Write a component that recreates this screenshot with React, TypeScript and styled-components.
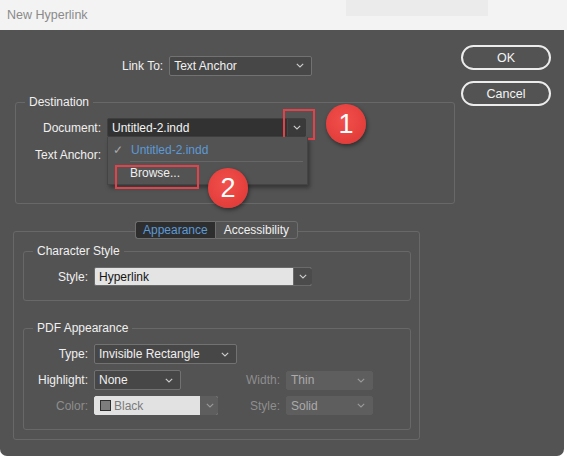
import styled, { createGlobalStyle } from "styled-components";

const GlobalStyle = createGlobalStyle`
  html, body {
    margin: 0;
    padding: 0;
    background: #ffffff;
  }
  body {
    font-family: "Liberation Sans", Arial, sans-serif;
    font-size: 12px;
    color: #ececec;
  }
  * {
    box-sizing: border-box;
  }
`;

type Variant = "dark" | "black" | "light" | "disabled" | "lightDisabled";

const Chevron = ({ color = "#cfcfcf" }: { color?: string }) => (
  <svg width="8" height="5" viewBox="0 0 8 5">
    <path d="M0.8 0.8 L4 4 L7.2 0.8" fill="none" stroke={color} strokeWidth="1.1" />
  </svg>
);

export default function App() {
  return (
    <>
      <GlobalStyle />
      <Window>
        <TitleBar>
          <span>New Hyperlink</span>
          <Patch />
        </TitleBar>
        <Body>
          <MainColumn>
            <LinkRow>
              <Label>Link To:</Label>
              <Select $variant="dark" $w={143}>
                <span>Text Anchor</span>
                <Chevron />
              </Select>
            </LinkRow>

            <Destination>
              <Legend>Destination</Legend>
              <FormRow $labelW={85}>
                <Label>Document:</Label>
                <Anchor>
                  <Select $variant="black" $w={199}>
                    <span>Untitled-2.indd</span>
                    <ArrowCell>
                      <Chevron />
                    </ArrowCell>
                  </Select>
                  <RedBox $l={176} $t={-9} $w={32} $h={31} />
                  <Callout $l={219} $t={-14}>1</Callout>
                  <Menu>
                    <MenuItem $active>
                      <Check>✓</Check>
                      <span>Untitled-2.indd</span>
                    </MenuItem>
                    <MenuDivider />
                    <MenuItem>
                      <span>Browse...</span>
                    </MenuItem>
                    <RedBox $l={7} $t={28} $w={84} $h={24} />
                    <Callout $l={100} $t={31}>2</Callout>
                  </Menu>
                </Anchor>
              </FormRow>
              <FormRow $labelW={85}>
                <Label>Text Anchor:</Label>
                <Select $variant="black" $w={199} />
              </FormRow>
            </Destination>

            <TabRow>
              <Tab $active>Appearance</Tab>
              <Tab>Accessibility</Tab>
            </TabRow>
            <TabPanel>
              <Group $pb={14}>
                <Legend>Character Style</Legend>
                <FormRow $labelW={64}>
                  <Label>Style:</Label>
                  <Select $variant="light" $w={218}>
                    <span>Hyperlink</span>
                    <ArrowCell $dark>
                      <Chevron />
                    </ArrowCell>
                  </Select>
                </FormRow>
              </Group>

              <Group $pb={14} $mt={20}>
                <Legend>PDF Appearance</Legend>
                <PdfGrid>
                  <Label>Type:</Label>
                  <Wide>
                    <Select $variant="dark" $w={143}>
                      <span>Invisible Rectangle</span>
                      <Chevron />
                    </Select>
                  </Wide>

                  <Label>Highlight:</Label>
                  <Select $variant="dark" $w={87}>
                    <span>None</span>
                    <Chevron />
                  </Select>
                  <Label $disabled>Width:</Label>
                  <Select $variant="disabled" $w={87}>
                    <span>Thin</span>
                    <Chevron color="#9a9a9a" />
                  </Select>

                  <Label $disabled>Color:</Label>
                  <Select $variant="lightDisabled" $w={124}>
                    <Swatch />
                    <span>Black</span>
                    <ArrowCell $muted>
                      <Chevron color="#9a9a9a" />
                    </ArrowCell>
                  </Select>
                  <Label $disabled>Style:</Label>
                  <Select $variant="disabled" $w={87}>
                    <span>Solid</span>
                    <Chevron color="#9a9a9a" />
                  </Select>
                </PdfGrid>
              </Group>
            </TabPanel>
          </MainColumn>

          <ButtonColumn>
            <PillButton>OK</PillButton>
            <PillButton>Cancel</PillButton>
          </ButtonColumn>
        </Body>
      </Window>
    </>
  );
}

const Window = styled.div`
  width: 567px;
  height: 456px;
  display: flex;
  flex-direction: column;
  background: #ffffff;
`;

const TitleBar = styled.div`
  height: 30px;
  flex: none;
  background: #f3f3f3;
  color: #8a8a8a;
  display: flex;
  align-items: flex-start;
  padding-left: 7px;
  span {
    margin-top: 8px;
    font-size: 12.5px;
  }
`;

const Patch = styled.div`
  width: 142px;
  height: 16px;
  margin-left: auto;
  margin-right: 79px;
  background: #ebebeb;
`;

const Body = styled.div`
  flex: 1;
  display: flex;
  background: #535353;
  width: 564px;
  border-radius: 0 0 7px 7px;
`;

const MainColumn = styled.div`
  width: 461px;
  padding: 25px 0 0 13px;
  display: flex;
  flex-direction: column;
`;

const ButtonColumn = styled.div`
  display: flex;
  flex-direction: column;
  gap: 11px;
  padding-top: 15px;
`;

const PillButton = styled.button`
  width: 90px;
  height: 25px;
  border: 2px solid #ececec;
  border-radius: 13px;
  background: transparent;
  color: #f4f4f4;
  font-family: inherit;
  font-size: 12.5px;
  padding: 0;
`;

const Label = styled.span<{ $disabled?: boolean }>`
  text-align: right;
  white-space: nowrap;
  color: ${(p) => (p.$disabled ? "#8e8e8e" : "#f0f0f0")};
  font-size: 12px;
`;

const LinkRow = styled.div`
  display: flex;
  align-items: center;
  gap: 6px;
  margin-left: 109px;
  height: 21px;
`;

const selectColors: Record<Variant, { bg: string; border: string; color: string }> = {
  dark: { bg: "#474747", border: "#727272", color: "#f0f0f0" },
  black: { bg: "#323232", border: "#3f3f3f", color: "#f4f4f4" },
  light: { bg: "#e4e4e4", border: "#6a6a6a", color: "#151515" },
  disabled: { bg: "#5e5e5e", border: "#5e5e5e", color: "#ababab" },
  lightDisabled: { bg: "#e2e2e2", border: "#e2e2e2", color: "#7a7a7a" },
};

const Select = styled.div<{ $variant: Variant; $w: number }>`
  position: relative;
  width: ${(p) => p.$w}px;
  height: ${(p) => (p.$variant === "dark" ? 20 : 19)}px;
  display: flex;
  align-items: center;
  gap: 5px;
  padding: 0 0 0 4px;
  background: ${(p) => selectColors[p.$variant].bg};
  border: 1px solid ${(p) => selectColors[p.$variant].border};
  border-radius: 2px;
  color: ${(p) => selectColors[p.$variant].color};
  font-size: 12px;
  span {
    flex: 1;
    white-space: nowrap;
  }
  & > svg {
    margin-right: 7px;
  }
`;

const ArrowCell = styled.div<{ $dark?: boolean; $muted?: boolean }>`
  align-self: stretch;
  width: ${(p) => (p.$muted ? 18 : 19)}px;
  margin: ${(p) => (p.$muted ? "-1px -1px -1px 0" : "0 -1px 0 0")};
  display: flex;
  align-items: center;
  justify-content: center;
  background: ${(p) => (p.$dark ? "#4b4b4b" : p.$muted ? "#5e5e5e" : "#3a3a3a")};
  border-left: 1px solid ${(p) => (p.$dark ? "#6a6a6a" : p.$muted ? "#5e5e5e" : "#444")};
  border-radius: 0 2px 2px 0;
`;

const Swatch = styled.i`
  width: 11px;
  height: 11px;
  flex: none;
  background: #7d7d7d;
  border: 1px solid #2e2e2e;
  margin-left: 1px;
  margin-right: -2px;
`;

const Fieldset = styled.fieldset`
  margin: 0;
  border: 1px solid #686868;
  border-radius: 3px;
  min-width: 0;
`;

const Legend = styled.legend`
  padding: 0 4px;
  margin-left: 9px;
  font-size: 12px;
  line-height: 15px;
  color: #f0f0f0;
`;

const Destination = styled(Fieldset)`
  width: 440px;
  margin: 19px 0 0 2px;
  padding: 8px 0 39px 0;
  display: flex;
  flex-direction: column;
  gap: 8px;
`;

const FormRow = styled.div<{ $labelW: number }>`
  display: grid;
  grid-template-columns: ${(p) => p.$labelW}px auto;
  column-gap: 6px;
  align-items: center;
`;

const Anchor = styled.div`
  position: relative;
  z-index: 2;
`;

const RedBox = styled.div<{ $l: number; $t: number; $w: number; $h: number }>`
  position: absolute;
  left: ${(p) => p.$l}px;
  top: ${(p) => p.$t}px;
  width: ${(p) => p.$w}px;
  height: ${(p) => p.$h}px;
  border: 2px solid #e2434a;
  pointer-events: none;
`;

const Callout = styled.div<{ $l: number; $t: number }>`
  position: absolute;
  left: ${(p) => p.$l}px;
  top: ${(p) => p.$t}px;
  width: 40px;
  height: 40px;
  border-radius: 50%;
  background: radial-gradient(circle at 45% 40%, #f1504c 0%, #e6403d 60%, #d93735 100%);
  box-shadow: 1px 2px 4px rgba(0, 0, 0, 0.45);
  color: #ffffff;
  font-family: "Liberation Sans", Arial, sans-serif;
  font-size: 27px;
  display: flex;
  align-items: center;
  justify-content: center;
`;

const Menu = styled.div`
  position: absolute;
  left: 0;
  top: 19px;
  width: 201px;
  height: 48px;
  background: #535353;
  border: 1px solid #444;
  border-top: none;
  box-shadow: 2px 3px 4px rgba(0, 0, 0, 0.35);
  padding-top: 3px;
`;

const MenuItem = styled.div<{ $active?: boolean }>`
  height: 20px;
  display: flex;
  align-items: center;
  padding-left: ${(p) => (p.$active ? 5 : 22)}px;
  color: ${(p) => (p.$active ? "#5c9ad6" : "#f0f0f0")};
  font-size: 12px;
`;

const Check = styled.span`
  width: 18px;
  color: #a8a8a8;
  font-size: 12px;
`;

const MenuDivider = styled.div`
  height: 1px;
  margin: 1px 4px 1px 22px;
  background: #666;
`;

const TabRow = styled.div`
  display: flex;
  justify-content: center;
  margin: 17px 0 -8px 0;
  width: 407px;
  position: relative;
  z-index: 1;
`;

const Tab = styled.div<{ $active?: boolean }>`
  height: 18px;
  padding: 0 ${(p) => (p.$active ? 7 : 8)}px;
  display: flex;
  align-items: center;
  font-size: 12px;
  background: ${(p) => (p.$active ? "#2e2e2e" : "#535353")};
  color: ${(p) => (p.$active ? "#5c9ad6" : "#f0f0f0")};
  border: 1px solid #6e6e6e;
  border-radius: ${(p) => (p.$active ? "3px 0 0 3px" : "0 3px 3px 0")};
  ${(p) => (p.$active ? "border-right: none;" : "")}
`;

const TabPanel = styled.div`
  width: 407px;
  border: 1px solid #686868;
  border-radius: 3px;
  padding: 12px 8px 9px 9px;
  display: flex;
  flex-direction: column;
`;

const Group = styled(Fieldset)<{ $pb: number; $mt?: number }>`
  padding: 8px 0 ${(p) => p.$pb}px 0;
  margin-top: ${(p) => p.$mt ?? 0}px;
`;

const PdfGrid = styled.div`
  display: grid;
  grid-template-columns: 64px 124px 56px 87px;
  column-gap: 6px;
  row-gap: 6px;
  align-items: center;
  & > *:nth-child(2n) {
    justify-self: start;
  }
`;

const Wide = styled.div`
  grid-column: 2 / span 3;
`;
